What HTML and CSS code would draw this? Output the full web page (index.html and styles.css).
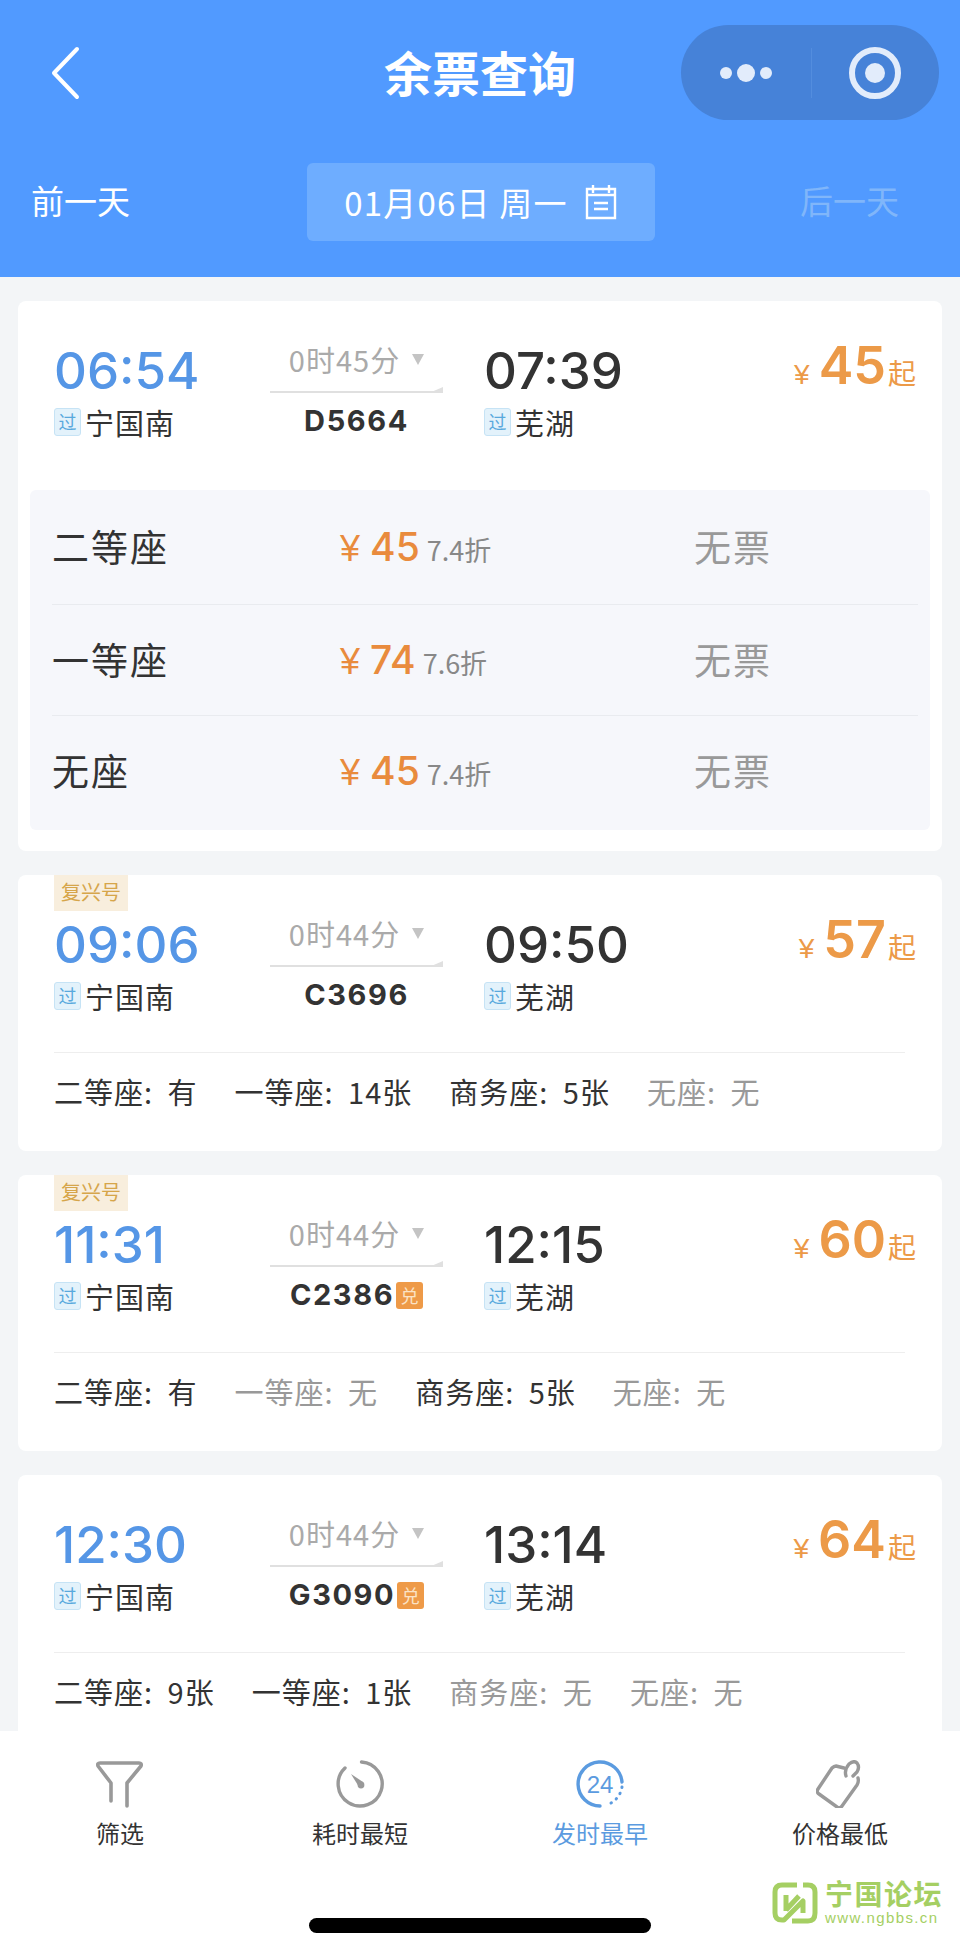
FILE: index.html
```html
<!DOCTYPE html>
<html lang="zh-CN">
<head>
    <meta charset="UTF-8">
    <meta name="viewport" content="width=device-width, initial-scale=1.0">
    <title>余票查询</title>
    <link rel="stylesheet" href="styles.css">
</head>
<body>
    <header class="header">
        <div class="nav-bar">
            <svg class="back-icon" width="30" height="54" viewBox="0 0 30 54"><path d="M27 3 L4 27 L27 51" fill="none" stroke="#fff" stroke-width="4" stroke-linecap="round" stroke-linejoin="round"/></svg>
            <h1 class="page-title">余票查询</h1>
            <div class="capsule">
                <div class="capsule-dots"><span class="dot"></span><span class="dot dot-big"></span><span class="dot"></span></div>
                <div class="capsule-line"></div>
                <div class="capsule-target"><span></span></div>
            </div>
        </div>
        <div class="date-bar">
            <span class="day-link">前一天</span>
            <div class="date-button">
                <span>01月06日 周一</span>
                <svg width="32" height="36" viewBox="0 0 32 36"><path d="M2 5 H30 V34 H2 Z M2 11 H30 M8 1 V9 M24 1 V9 M9 19 H23 M9 25 H23" fill="none" stroke="#fff" stroke-width="2.4"/></svg>
            </div>
            <span class="day-link day-link-off">后一天</span>
        </div>
    </header>

    <main class="train-list">
        <section class="card card-open">
            <div class="card-head">
                <div class="stop">
                    <div class="time time-start">06:54</div>
                    <div class="station"><span class="pass-tag">过</span>宁国南</div>
                </div>
                <div class="middle">
                    <div class="duration">0时45分<i class="triangle"></i></div>
                    <div class="arrow"></div>
                    <div class="train-no">D5664</div>
                </div>
                <div class="stop stop-end">
                    <div class="time">07:39</div>
                    <div class="station"><span class="pass-tag">过</span>芜湖</div>
                </div>
                <div class="price"><span class="yen">¥</span><span class="amount">45</span><span class="from">起</span></div>
            </div>
            <div class="seat-panel">
                <div class="seat-line">
                    <span class="seat-name">二等座</span>
                    <span class="seat-price"><b>¥</b><b class="seat-amount">45</b><small>7.4折</small></span>
                    <span class="seat-left">无票</span>
                </div>
                <div class="seat-line">
                    <span class="seat-name">一等座</span>
                    <span class="seat-price"><b>¥</b><b class="seat-amount">74</b><small>7.6折</small></span>
                    <span class="seat-left">无票</span>
                </div>
                <div class="seat-line">
                    <span class="seat-name">无座</span>
                    <span class="seat-price"><b>¥</b><b class="seat-amount">45</b><small>7.4折</small></span>
                    <span class="seat-left">无票</span>
                </div>
            </div>
        </section>

        <section class="card">
            <span class="fuxing">复兴号</span>
            <div class="card-head">
                <div class="stop">
                    <div class="time time-start">09:06</div>
                    <div class="station"><span class="pass-tag">过</span>宁国南</div>
                </div>
                <div class="middle">
                    <div class="duration">0时44分<i class="triangle"></i></div>
                    <div class="arrow"></div>
                    <div class="train-no">C3696</div>
                </div>
                <div class="stop stop-end">
                    <div class="time">09:50</div>
                    <div class="station"><span class="pass-tag">过</span>芜湖</div>
                </div>
                <div class="price"><span class="yen">¥</span><span class="amount">57</span><span class="from">起</span></div>
            </div>
            <div class="seat-row">
                <span>二等座: 有</span>
                <span>一等座: 14张</span>
                <span>商务座: 5张</span>
                <span class="sold-out">无座: 无</span>
            </div>
        </section>

        <section class="card">
            <span class="fuxing">复兴号</span>
            <div class="card-head">
                <div class="stop">
                    <div class="time time-start">11:31</div>
                    <div class="station"><span class="pass-tag">过</span>宁国南</div>
                </div>
                <div class="middle">
                    <div class="duration">0时44分<i class="triangle"></i></div>
                    <div class="arrow"></div>
                    <div class="train-no">C2386<span class="swap-tag">兑</span></div>
                </div>
                <div class="stop stop-end">
                    <div class="time">12:15</div>
                    <div class="station"><span class="pass-tag">过</span>芜湖</div>
                </div>
                <div class="price"><span class="yen">¥</span><span class="amount">60</span><span class="from">起</span></div>
            </div>
            <div class="seat-row">
                <span>二等座: 有</span>
                <span class="sold-out">一等座: 无</span>
                <span>商务座: 5张</span>
                <span class="sold-out">无座: 无</span>
            </div>
        </section>

        <section class="card">
            <div class="card-head">
                <div class="stop">
                    <div class="time time-start">12:30</div>
                    <div class="station"><span class="pass-tag">过</span>宁国南</div>
                </div>
                <div class="middle">
                    <div class="duration">0时44分<i class="triangle"></i></div>
                    <div class="arrow"></div>
                    <div class="train-no">G3090<span class="swap-tag">兑</span></div>
                </div>
                <div class="stop stop-end">
                    <div class="time">13:14</div>
                    <div class="station"><span class="pass-tag">过</span>芜湖</div>
                </div>
                <div class="price"><span class="yen">¥</span><span class="amount">64</span><span class="from">起</span></div>
            </div>
            <div class="seat-row">
                <span>二等座: 9张</span>
                <span>一等座: 1张</span>
                <span class="sold-out">商务座: 无</span>
                <span class="sold-out">无座: 无</span>
            </div>
        </section>
    </main>

    <footer class="tab-bar">
        <div class="tabs">
            <div class="tab">
                <svg width="48" height="48" viewBox="0 0 48 48"><path d="M15 41 V23 L2 6 Q1 3 4 3 H43 Q46 3 45 6 L31 23 V46" fill="none" stroke="#999" stroke-width="3.6" stroke-linecap="round" stroke-linejoin="round"/></svg>
                <span>筛选</span>
            </div>
            <div class="tab">
                <svg width="48" height="48" viewBox="0 0 48 48"><path d="M25.5 2 A22 22 0 1 1 9 8" fill="none" stroke="#999" stroke-width="3.4" stroke-linecap="round"/><path d="M15 14 L27 22 L23 27 Z" fill="#999"/><circle cx="25" cy="25" r="3.4" fill="#999"/></svg>
                <span>耗时最短</span>
            </div>
            <div class="tab tab-active">
                <svg width="48" height="48" viewBox="0 0 48 48"><path d="M46 22 A22 22 0 1 0 24 46" fill="none" stroke="#5b9be0" stroke-width="3.4" stroke-linecap="round"/><path d="M46 27 A22 22 0 0 1 30 45" fill="none" stroke="#5b9be0" stroke-width="3" stroke-linecap="round" stroke-dasharray="0.5 6"/><text x="24" y="33" text-anchor="middle" class="clock-text">24</text></svg>
                <span>发时最早</span>
            </div>
            <div class="tab">
                <svg width="48" height="48" viewBox="0 0 48 48"><path d="M28 8 L20 6 Q18 6 16 8 L2 29 Q0 32 3 34 L21 47 Q24 49 26 46 L41 25 Q43 22 42 18" fill="none" stroke="#999" stroke-width="3.4" stroke-linecap="round" stroke-linejoin="round"/><path d="M30 16 Q28 10 33 4 Q38 0 41 3 Q44 7 41 12 L37 16" fill="none" stroke="#999" stroke-width="3.4" stroke-linecap="round"/></svg>
                <span>价格最低</span>
            </div>
        </div>
        <div class="home-line"></div>
        <div class="watermark">
            <svg width="46" height="42" viewBox="0 0 46 42"><path d="M25 3 H10 Q3 3 3 10 V31 Q3 38 10 38 H12 L31 19 V31 M14 29 V13 M14 28 L27 14 M31 3 H36 Q43 3 43 10 V31 Q43 39 36 39 H20" fill="none" stroke="#a5cf63" stroke-width="5" stroke-linejoin="round"/></svg>
            <div class="watermark-text">
                <strong>宁国论坛</strong>
                <span>www.ngbbs.cn</span>
            </div>
        </div>
    </footer>
</body>
</html>
```

FILE: styles.css
```css
* {
    box-sizing: border-box;
}
body {
    margin: 0;
    width: 960px;
    height: 1936px;
    display: flex;
    flex-direction: column;
    overflow: hidden;
    background-color: #f3f5f7;
    font-family: "Liberation Sans", "Noto Sans CJK SC", sans-serif;
    color: #333;
}

/* top blue area */
.header {
    height: 277px;
    flex: none;
    background-color: #519aff;
    color: #fff;
}
.nav-bar {
    height: 163px;
    padding: 25px 21px 0 50px;
    display: flex;
    align-items: flex-start;
    position: relative;
}
.back-icon {
    margin-top: 21px;
}
.page-title {
    position: absolute;
    left: 0;
    right: 0;
    top: 41px;
    margin: 0;
    text-align: center;
    font-size: 48px;
    line-height: 60px;
    font-weight: 700;
    font-family: "Noto Sans CJK SC", sans-serif;
}
.capsule {
    margin-left: auto;
    width: 258px;
    height: 95px;
    border-radius: 48px;
    background-color: #4682d8;
    display: flex;
    align-items: center;
}
.capsule-dots {
    width: 130px;
    display: flex;
    justify-content: center;
    align-items: center;
    gap: 5px;
}
.dot {
    width: 12px;
    height: 12px;
    border-radius: 50%;
    background-color: #e2ecfb;
}
.dot-big {
    width: 18px;
    height: 18px;
}
.capsule-line {
    width: 1px;
    height: 50px;
    background-color: #538dde;
}
.capsule-target {
    width: 52px;
    height: 52px;
    margin-left: 37px;
    border: 6px solid #e2ecfb;
    border-radius: 50%;
    display: flex;
    justify-content: center;
    align-items: center;
}
.capsule-target span {
    width: 20px;
    height: 20px;
    border-radius: 50%;
    background-color: #e2ecfb;
}
.date-bar {
    padding: 0 62px 0 31px;
    display: flex;
    justify-content: space-between;
    align-items: center;
    height: 78px;
    font-family: "Noto Sans CJK SC", sans-serif;
}
.day-link {
    font-size: 33px;
    width: 98px;
    white-space: nowrap;
    margin-top: -4px;
}
.day-link-off {
    color: #80b6fa;
}
.date-button {
    width: 348px;
    height: 78px;
    margin-left: 32px;
    border-radius: 6px;
    background-color: #6eadff;
    display: flex;
    align-items: center;
    justify-content: center;
    gap: 17px;
    font-size: 33px;
    letter-spacing: 1.2px;
    white-space: nowrap;
}

/* train cards */
.train-list {
    flex: 1;
    min-height: 0;
    overflow: hidden;
    padding: 24px 18px 0;
    display: flex;
    flex-direction: column;
    gap: 24px;
}
.card {
    flex: none;
    height: 276px;
    position: relative;
    background-color: #fff;
    border-radius: 8px;
}
.card-open {
    height: 550px;
}
.fuxing {
    position: absolute;
    left: 36px;
    top: 0;
    width: 74px;
    height: 36px;
    background-color: #f8eedd;
    color: #d6a54a;
    font-family: "Noto Sans CJK SC", sans-serif;
    font-size: 20px;
    line-height: 34px;
    text-align: center;
}
.card-head {
    height: 177px;
    padding: 39px 26px 0 36px;
    display: flex;
    align-items: flex-start;
}
.stop {
    width: 216px;
}
.stop-end {
    width: 200px;
}
.time {
    font-family: Inter, "Liberation Sans", sans-serif;
    font-size: 51px;
    font-weight: 500;
    line-height: 62px;
    color: #333;
}
.time-start {
    color: #5596e6;
}
.station {
    display: flex;
    align-items: center;
    height: 39px;
    font-family: "Noto Sans CJK SC", sans-serif;
    font-size: 29px;
    letter-spacing: 1px;
}
.pass-tag {
    width: 27px;
    height: 28px;
    margin-right: 4px;
    border: 1px solid #c6e3f5;
    border-radius: 3px;
    background-color: #e3f2fb;
    color: #59a9dd;
    font-size: 18px;
    line-height: 25px;
    letter-spacing: 0;
    text-align: center;
}
.middle {
    width: 173px;
    margin-top: -1px;
    margin-right: 41px;
    text-align: center;
}
.duration {
    height: 40px;
    font-family: "Noto Sans CJK SC", sans-serif;
    font-size: 29px;
    line-height: 40px;
    letter-spacing: 1px;
    color: #aaa;
    white-space: nowrap;
    display: flex;
    justify-content: center;
    gap: 12px;
}
.triangle {
    flex: none;
    width: 0;
    height: 0;
    margin-top: 15px;
    border-left: 6px solid transparent;
    border-right: 6px solid transparent;
    border-top: 11px solid #c4c4c4;
}
.arrow {
    margin-top: 12px;
    height: 2px;
    background-color: #e0e0e0;
    position: relative;
}
.arrow::after {
    content: "";
    position: absolute;
    right: 0;
    bottom: 0;
    border-left: 14px solid transparent;
    border-bottom: 6px solid #e0e0e0;
}
.train-no {
    margin-top: 10px;
    height: 36px;
    font-family: Inter, "Liberation Sans", sans-serif;
    font-size: 29px;
    line-height: 36px;
    font-weight: 700;
    letter-spacing: 1.6px;
    display: flex;
    justify-content: center;
    align-items: center;
    gap: 2px;
}
.swap-tag {
    width: 27px;
    height: 27px;
    border-radius: 3px;
    background-color: #ee9a48;
    color: #fbe3c6;
    font-family: "Noto Sans CJK SC", sans-serif;
    font-size: 18px;
    font-weight: normal;
    letter-spacing: 0;
    line-height: 26px;
    text-align: center;
}
.price {
    margin-left: auto;
    margin-top: -7px;
    display: flex;
    align-items: baseline;
    color: #ec9a48;
    white-space: nowrap;
}
.yen {
    font-size: 28px;
    margin-right: 9px;
}
.amount {
    font-family: Inter, "Liberation Sans", sans-serif;
    font-size: 52px;
    font-weight: 600;
    line-height: 66px;
}
.from {
    font-family: "Noto Sans CJK SC", sans-serif;
    font-size: 28px;
    margin-left: 2px;
}
.seat-panel {
    margin: 12px 12px 0;
    height: 340px;
    padding: 0 12px 0 22px;
    background-color: #f6f7fb;
    border-radius: 6px;
    font-family: "Noto Sans CJK SC", sans-serif;
}
.seat-line {
    height: 111px;
    padding-bottom: 2px;
    display: flex;
    align-items: center;
    border-bottom: 1px solid #e9ebef;
}
.seat-line:first-child {
    height: 115px;
}
.seat-line:last-child {
    height: 110px;
    border-bottom: none;
}
.seat-name {
    width: 288px;
    font-size: 37px;
    letter-spacing: 2px;
    color: #333;
}
.seat-price {
    width: 354px;
    color: #e98b3d;
    display: flex;
    align-items: baseline;
}
.seat-price b {
    font-family: "Liberation Sans", sans-serif;
    font-weight: normal;
    font-size: 36px;
}
.seat-price .seat-amount {
    font-family: Inter, "Liberation Sans", sans-serif;
    font-size: 39px;
    font-weight: 500;
    margin-left: 10px;
}
.seat-price small {
    margin-left: 7px;
    font-size: 27px;
    color: #888;
}
.seat-left {
    font-size: 37px;
    letter-spacing: 2px;
    color: #999;
}
.seat-row {
    margin: 0 37px 0 36px;
    padding-top: 18px;
    border-top: 1px solid #eee;
    display: flex;
    gap: 37px;
    font-family: "Noto Sans CJK SC", "Liberation Sans", sans-serif;
    font-size: 29px;
    letter-spacing: 1px;
    word-spacing: 7px;
    line-height: 40px;
    white-space: nowrap;
}
.sold-out {
    color: #999;
}

/* bottom toolbar */
.tab-bar {
    height: 205px;
    flex: none;
    position: relative;
    background-color: #fff;
    padding-top: 29px;
}
.tabs {
    display: grid;
    grid-template-columns: repeat(4, 240px);
}
.tab {
    display: flex;
    flex-direction: column;
    align-items: center;
    font-family: "Noto Sans CJK SC", sans-serif;
    font-size: 24px;
    line-height: 36px;
    gap: 7px;
}
.tab-active {
    color: #5b9be0;
}
.clock-text {
    font-family: "Liberation Sans", sans-serif;
    font-size: 24px;
    fill: #5b9be0;
}
.home-line {
    position: absolute;
    left: 309px;
    top: 187px;
    width: 342px;
    height: 15px;
    border-radius: 8px;
    background-color: #000;
}
.watermark {
    position: absolute;
    left: 772px;
    top: 151px;
    display: flex;
    gap: 7px;
    color: #a5cf63;
}
.watermark-text {
    display: flex;
    flex-direction: column;
    width: 118px;
}
.watermark-text strong {
    font-size: 28px;
    line-height: 27px;
    letter-spacing: 1.5px;
    white-space: nowrap;
}
.watermark-text span {
    margin-top: 2px;
    font-size: 15px;
    line-height: 14px;
    letter-spacing: 1.4px;
    white-space: nowrap;
}
```
